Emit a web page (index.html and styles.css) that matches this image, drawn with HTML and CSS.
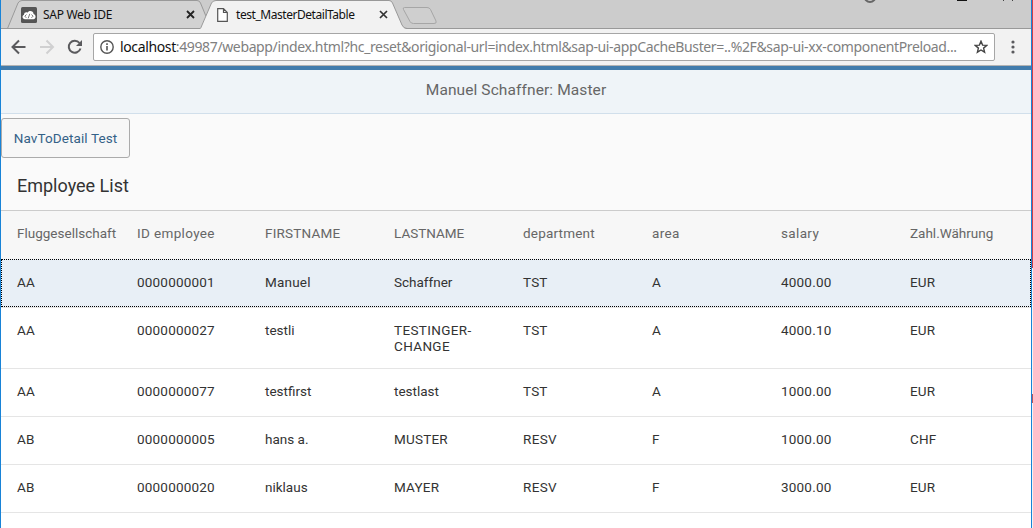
FILE: index.html
```html
<!DOCTYPE html>
<html lang="en">
<head>
<meta charset="utf-8">
<title>test_MasterDetailTable</title>
<link rel="stylesheet" href="styles.css">
</head>
<body>
<div class="screen">
<div class="window">
  <div class="tabstrip">
    <svg class="tab-shapes" width="1030" height="29" viewBox="1 0 1030 29">
      <path d="M7.500 28.500L18 3Q19.500 .5 22 .5H197Q199.500 .5 200.500 3L211 28.500Z" fill="#d2d2d2" stroke="#999"/>
      <path d="M1 28.500H1031" stroke="#999"/>
      <path d="M200 29L211.500 3Q213 .5 216 .5H389Q391.500 .5 392.500 3L402 25Q403.500 28.500 407 29Z" fill="#f2f2f2"/>
      <path d="M200.500 28.500L211.500 3Q213 .5 216 .5H389Q391.500 .5 392.500 3L402 25Q403.500 28.500 407 28.500" fill="none" stroke="#999"/>
      <path d="M404.500 7.500H427Q429.500 7.500 430.500 9.500L436 21Q437 23.500 434 23.500H413.500Q411 23.500 410 21.500L403.500 9.500Q402.500 7.500 404.500 7.500Z" fill="#cfcfcf" stroke="#a6a6a6"/>
      <circle cx="870" cy="-3.500" r="5.500" fill="none" stroke="#666" stroke-width="2"/>
      <path d="M957 .5H967" stroke="#111"/>
      <path d="M1003.500 0V1M1012.500 0V1" stroke="#444"/>
    </svg>
    <div class="tab tab-ide">
      <svg width="16" height="16" viewBox="0 0 16 16"><rect width="16" height="16" rx="1.500" fill="#555"/><path d="M4 12.200C1 12 .8 8.500 3 7.800C3 5.500 5.500 4.800 6.400 5.800C8 2.700 12.500 3.800 12.600 7C15.500 8 15 12 12.500 12.200Z" fill="#fff"/><path d="M5.500 7.500L3.900 9.200L5.300 10.800M10.500 7.500L12 9.200L10.500 10.800M8.800 6.800L7.200 11.300" fill="none" stroke="#555" stroke-width=".8"/></svg>
      <span class="tab-title ide-title">SAP Web IDE</span>
      <svg class="close" width="9" height="9" viewBox="0 0 9 9"><path d="M1 1L8 8M8 1L1 8" stroke="#222" stroke-width="1.800"/></svg>
    </div>
    <div class="tab tab-active">
      <svg width="11" height="14" viewBox="0 0 11 14"><path d="M.7 .7H6.500L10.300 4.500V13.300H.7ZM6.500 .7V4.500H10.300" fill="#fff" stroke="#555" stroke-width="1.200"/></svg>
      <span class="tab-title active-title">test_MasterDetailTable</span>
      <svg class="close" width="9" height="9" viewBox="0 0 9 9"><path d="M1 1L8 8M8 1L1 8" stroke="#333" stroke-width="1.700"/></svg>
    </div>
  </div>
  <div class="toolbar">
    <svg class="nav" width="74" height="18" viewBox="0 0 74 18">
      <path d="M14.500 9H2M8 2.500L1.500 9L8 15.500" fill="none" stroke="#5a5a5d" stroke-width="2"/>
      <path d="M29 9H41.500M35.500 2.500L42 9L35.500 15.500" fill="none" stroke="#d0d0d1" stroke-width="2"/>
      <path d="M68.500 5A6 6 0 1 0 69.500 10.500" fill="none" stroke="#5a5a5d" stroke-width="2"/><path d="M71 2V8H65Z" fill="#5a5a5d"/>
    </svg>
    <div class="address">
      <svg width="14" height="14" viewBox="0 0 14 14"><circle cx="7" cy="7" r="6.200" fill="none" stroke="#555" stroke-width="1.400"/><path d="M7 6V10.500M7 3.300V4.900" stroke="#555" stroke-width="1.600"/></svg>
      <span class="url"><b class="host">localhost</b>:49987/webapp/index.html?hc_reset&amp;origional-url=index.html&amp;sap-ui-appCacheBuster=..%2F&amp;sap-ui-xx-componentPreload...</span>
      <svg class="star" width="14" height="14" viewBox="0 0 14 14"><path d="M7 1.200L8.600 5.100L12.800 5.400L9.600 8.100L10.600 12.200L7 10L3.400 12.200L4.400 8.100L1.200 5.400L5.400 5.100Z" fill="none" stroke="#444" stroke-width="1.400"/></svg>
    </div>
    <svg class="more" width="4" height="14" viewBox="0 0 4 14"><g fill="#5a5a5d"><circle cx="2" cy="2" r="1.600"/><circle cx="2" cy="7" r="1.600"/><circle cx="2" cy="12" r="1.600"/></g></svg>
  </div>
  <header class="page-header"><span>Manuel Schaffner: Master</span></header>
  <div class="actions"><button class="nav-button">NavToDetail Test</button></div>
  <div class="list-title"><span>Employee List</span></div>
  <div class="table">
    <div class="row head"><span class="tight">Fluggesellschaft</span><span class="wide">ID employee</span><span>FIRSTNAME</span><span class="tight">LASTNAME</span><span>department</span><span class="wide">area</span><span class="wide">salary</span><span class="tight">Zahl.Währung</span></div>
    <div class="row selected"><span>AA</span><span>0000000001</span><span>Manuel</span><span class="tight">Schaffner</span><span>TST</span><span>A</span><span>4000.00</span><span>EUR</span></div>
    <div class="row tall"><span>AA</span><span>0000000027</span><span class="tight">testli</span><span class="wide">TESTINGER-<br>CHANGE</span><span>TST</span><span>A</span><span>4000.10</span><span>EUR</span></div>
    <div class="row"><span>AA</span><span>0000000077</span><span class="tight">testfirst</span><span class="tight">testlast</span><span>TST</span><span>A</span><span>1000.00</span><span>EUR</span></div>
    <div class="row"><span>AB</span><span>0000000005</span><span class="tight">hans a.</span><span>MUSTER</span><span class="wide">RESV</span><span>F</span><span>1000.00</span><span>CHF</span></div>
    <div class="row"><span>AB</span><span>0000000020</span><span class="tight">niklaus</span><span>MAYER</span><span class="wide">RESV</span><span>F</span><span>3000.00</span><span>EUR</span></div>
  </div>
</div>
<div class="backdrop"><i class="red-top"></i><i class="red-low"></i></div>
</div>
</body>
</html>
```
FILE: styles.css
```css
* { box-sizing: border-box; }
body { margin: 0; overflow: hidden; background: #fff; font-family: Roboto, sans-serif; }
.screen { display: flex; width: 1033px; height: 528px; }
.window { width: 1032px; height: 528px; border: solid #1883d7; border-width: 0 1px; background: #fff; overflow: hidden; }
.backdrop { width: 1px; display: flex; flex-direction: column; background: #f3f3f3; }
.red-top { height: 268px; background: #d13f49; }
.red-low { height: 9px; margin-top: 126px; background: #b9555c; }

.tabstrip { position: relative; display: flex; height: 29px; background: #ccc; }
.tab-shapes { position: absolute; left: 0; top: 0; }
.tab { position: relative; display: flex; align-items: center; height: 29px; font-family: "Noto Sans", sans-serif; font-size: 12px; color: #111; }
.tab-ide { width: 174px; margin-left: 20px; }
.tab-active { width: 171px; margin-left: 22px; }
.tab-title { white-space: nowrap; line-height: 16px; }
.ide-title { margin-left: 6px; letter-spacing: -.3px; }
.active-title { margin-left: 8px; letter-spacing: -.45px; }
.close { margin-left: auto; }

.toolbar { display: flex; align-items: center; height: 37px; background: #f2f2f2; border-bottom: 1px solid #b3b3b3; }
.nav { margin-left: 10px; flex: none; }
.address { display: flex; align-items: center; width: 902px; height: 28px; margin-left: 8px; padding: 0 6px; background: #fff; border: 1px solid #a6a6a6; border-radius: 2px; }
.url { margin-left: 6px; white-space: nowrap; color: #808080; font: 14px/20px "Noto Sans", sans-serif; letter-spacing: -.37px; }
.host { color: #111; font-weight: 400; }
.star { margin-left: auto; }
.more { margin-left: 16px; }

.page-header { display: flex; align-items: center; justify-content: center; height: 48px; padding-bottom: 3px; border-top: 4px solid #427cac; border-bottom: 1px solid #d1dfeb; background: #eff4f8; color: #666; font-size: 15.5px; line-height: 20px; letter-spacing: .1px; }
.actions { height: 48px; padding-top: 4px; background: #fafafa; }
.nav-button { display: block; width: 129px; height: 40px; padding: 0; border: 1px solid #ababab; border-radius: 3px; background: #f7f7f7; color: #346187; font: 13.5px Roboto, sans-serif; letter-spacing: .1px; }
.list-title { display: flex; align-items: center; height: 48px; padding: 0 0 2px 16px; background: #fafafa; color: #333; font-size: 18px; }

.row { display: grid; grid-template-columns: 120px 128px 129px 129px 129px 129px 129px 120px; height: 48px; padding: 14px 0 0 16px; border-bottom: 1px solid #e5e5e5; color: #333; font-size: 13.5px; line-height: 16px; letter-spacing: .2px; white-space: nowrap; }
.tight { letter-spacing: 0; }
.wide { letter-spacing: .35px; }
.head { height: 49px; padding-top: 14px; border-top: 1px solid #ccc; border-bottom: 0; background: #f7f7f7; color: #666; }
.selected { position: relative; height: 49px; padding-top: 15px; background: #e8eff6; }
.selected::after { content: ""; position: absolute; inset: 0; border: 1px dotted #000; }
.tall { height: 61px; }
```
